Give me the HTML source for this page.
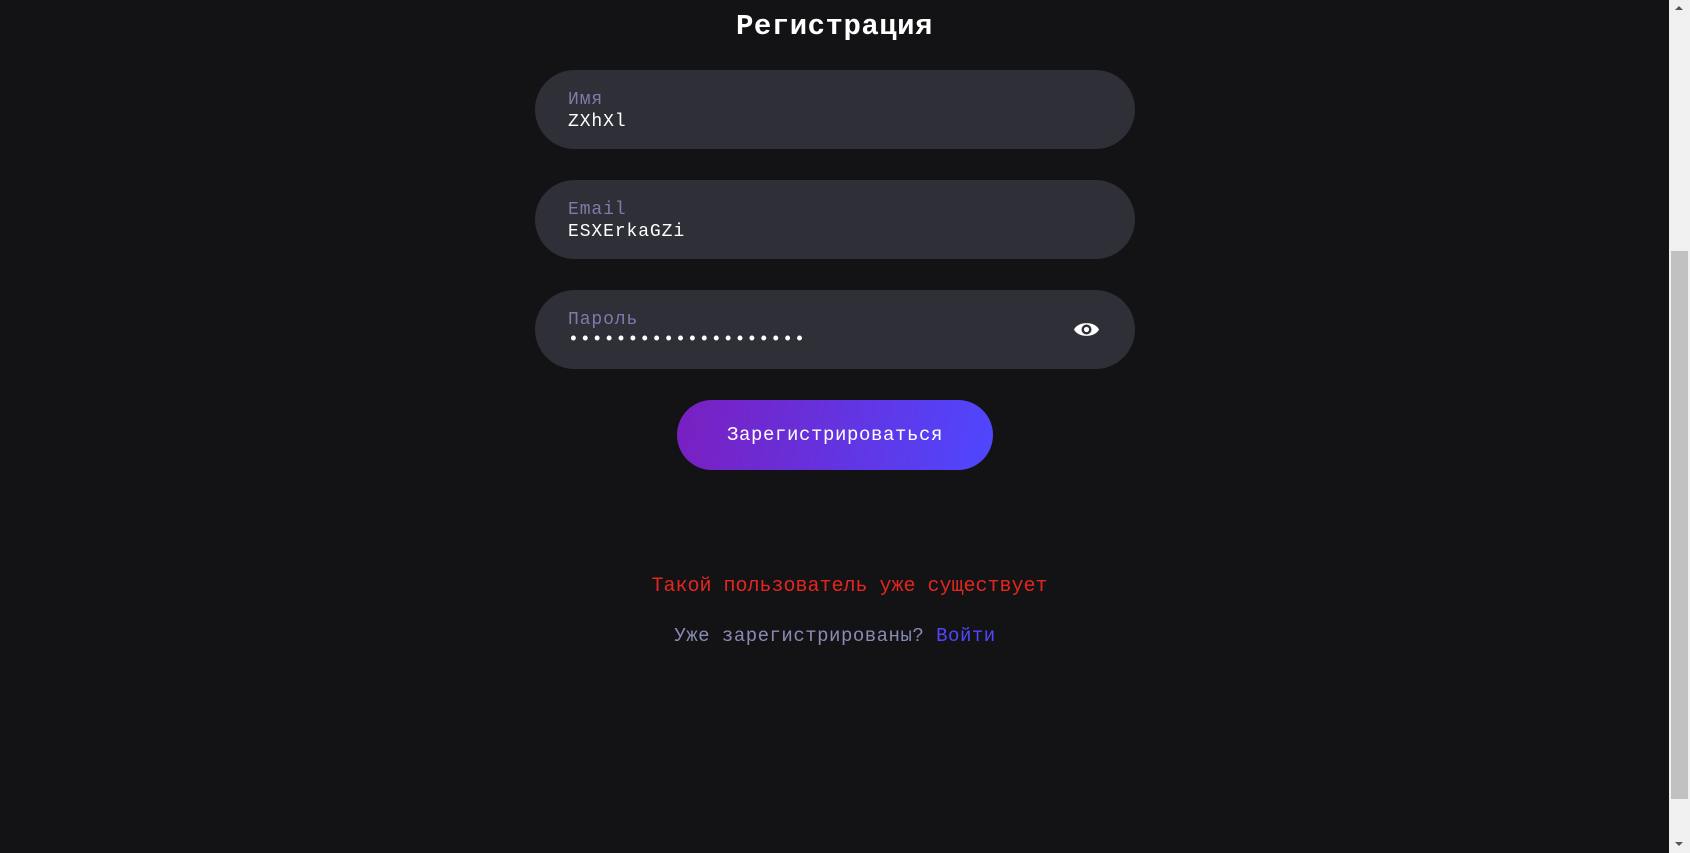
<!DOCTYPE html>
<html><head><meta charset="utf-8"><style>
html,body{margin:0;padding:0;width:1690px;height:853px;overflow:hidden;background:#131316;font-family:"Liberation Mono","DejaVu Sans Mono",monospace;}
.t{position:absolute;white-space:nowrap;}
.inp{position:absolute;left:535px;width:600px;height:79px;border-radius:40px;background:#2f2f38;}
.lab{position:absolute;left:33px;top:20px;font-size:18px;color:#7c7ca8;letter-spacing:0.9px;}
.val{position:absolute;left:33px;top:42px;font-size:18px;color:#fff;letter-spacing:0.9px;}
.sb{position:absolute;left:1669px;top:0;width:21px;height:853px;background:#f0f0f0;}
</style></head><body>
<div class="t" style="left:0;width:1669px;text-align:center;top:10px;font-size:29px;font-weight:bold;color:#fff;letter-spacing:0.5px;">Регистрация</div>
<div class="inp" style="top:70px"><div class="lab">Имя</div><div class="val">ZXhXl</div></div>
<div class="inp" style="top:180px"><div class="lab">Email</div><div class="val">ESXErkaGZi</div></div>
<div class="inp" style="top:290px"><div class="lab">Пароль</div><div class="val" style="letter-spacing:1.1px;top:40px">••••••••••••••••••••</div>
<svg style="position:absolute;left:538px;top:29px" width="27" height="21" viewBox="0 0 27 21"><path d="M1 10.5C5 2 22 2 26 10.5C22 19 5 19 1 10.5Z" fill="#fff"/><circle cx="13.5" cy="10.5" r="5" fill="#2f2f38"/><circle cx="13.5" cy="10.5" r="2.6" fill="#fff"/></svg></div>
<div style="position:absolute;left:677px;top:400px;width:316px;height:70px;border-radius:35px;background:linear-gradient(100deg,#7a1fc0,#4f47ff);"></div>
<div class="t" style="left:677px;width:316px;top:424px;text-align:center;font-size:19px;color:#fff;letter-spacing:0.6px;">Зарегистрироваться</div>
<div class="t" style="left:0;width:1699px;text-align:center;top:575px;font-size:20px;color:#e3261f;letter-spacing:0px;">Такой пользователь уже существует</div>
<div class="t" style="left:0;width:1670px;text-align:center;top:625px;font-size:19px;color:#8a8ab5;letter-spacing:0.5px;">Уже зарегистрированы? <span style="color:#4f47ff">Войти</span></div>
<div class="sb"><div style="position:absolute;left:2px;top:251px;width:17px;height:548px;background:#c1c1c1;"></div>
<div style="position:absolute;left:6px;top:6px;border-left:4px solid transparent;border-right:4px solid transparent;border-bottom:4px solid #555;"></div>
<div style="position:absolute;left:6px;top:842px;border-left:4px solid transparent;border-right:4px solid transparent;border-top:4px solid #555;"></div></div>
</body></html>
